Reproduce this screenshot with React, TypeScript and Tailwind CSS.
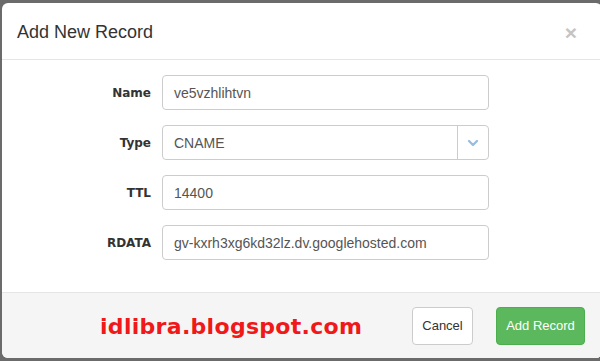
import { ChevronDown } from "lucide-react";

const fields = [
  { label: "Name", value: "ve5vzhlihtvn" },
  { label: "Type", value: "CNAME", select: true },
  { label: "TTL", value: "14400" },
  { label: "RDATA", value: "gv-kxrh3xg6kd32lz.dv.googlehosted.com" },
];

export default function App() {
  return (
    <div className="w-[600px] h-[361px] bg-[#6b6b6b] overflow-hidden pt-[3px] pl-[2px] font-['Liberation_Sans',Arial,sans-serif]">
      <div className="w-[600px] h-[355px] bg-white rounded-[6px] flex flex-col overflow-hidden">
        {/* header */}
        <div className="h-[57px] border-b border-[#e5e5e5] flex items-center justify-between pl-[15px] pr-[25px]">
          <h4 className="text-[18px] text-[#333] leading-none mt-[1px]">Add New Record</h4>
          <span className="text-[21px] font-bold text-[#c4c4c4] leading-none mt-[3px]">×</span>
        </div>

        {/* body */}
        <div className="flex-1 pt-[15px] px-[15px] flex flex-col gap-[15px]">
          {fields.map((f) => (
            <div key={f.label} className="flex items-center gap-[11px]">
              <label className="w-[134px] text-right text-[12px] font-bold text-[#333] font-['DejaVu_Sans',sans-serif]">
                {f.label}
              </label>
              <div className="w-[327px] h-[35px] border border-[#ccc] rounded-[4px] flex items-center text-[14px] text-[#555]">
                <span className="flex-1 pl-[11px] pt-[1px]">{f.value}</span>
                {f.select && (
                  <span className="w-[31px] h-full border-l border-[#ccc] flex items-center justify-center">
                    <ChevronDown size={16} strokeWidth={3.5} className="text-[#97bde0]" />
                  </span>
                )}
              </div>
            </div>
          ))}
        </div>

        {/* footer */}
        <div className="h-[66px] border-t border-[#e5e5e5] bg-[#f5f5f5] flex items-center pl-[98px] pr-[17px]">
          <span className="text-[22px] font-bold text-[#f01818] tracking-[0.3px] font-['DejaVu_Sans',sans-serif] mt-[2px]">
            idlibra.blogspot.com
          </span>
          <div className="ml-auto flex items-center gap-[23px]">
            <button className="h-[38px] w-[61px] bg-white border border-[#ccc] rounded-[4px] text-[13px] text-[#333]">
              Cancel
            </button>
            <button className="h-[38px] w-[89px] bg-[#5cb85c] border border-[#4cae4c] rounded-[4px] text-[13px] text-white">
              Add Record
            </button>
          </div>
        </div>
      </div>
    </div>
  );
}
